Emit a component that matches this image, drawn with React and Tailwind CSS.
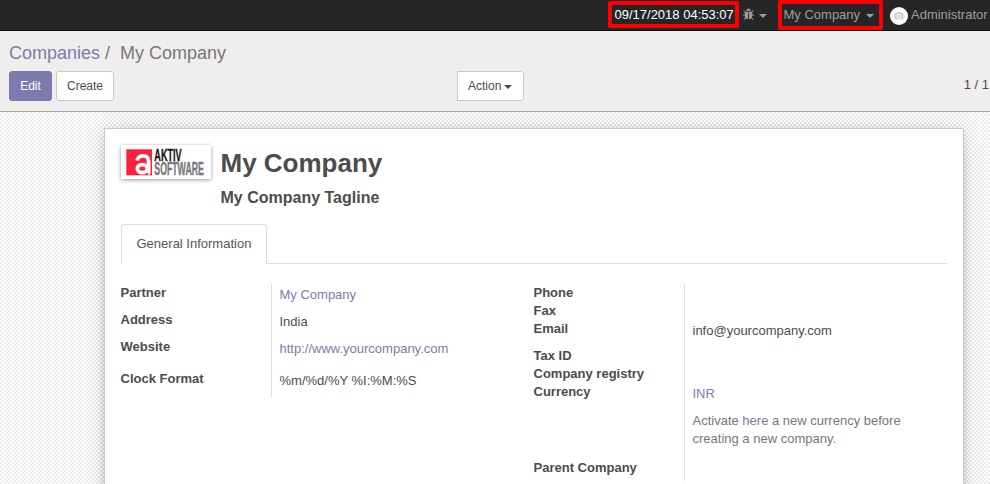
function Caret({ className = "" }) {
  return (
    <span
      className={`inline-block h-0 w-0 border-x-4 border-t-4 border-x-transparent ${className}`}
    />
  );
}

function BugIcon({ className = "" }) {
  return (
    <svg className={className} viewBox="0 0 1792 1792" fill="currentColor">
      <path d="M1696 960q0 26-19 45t-45 19h-224q0 171-67 290l208 209q19 19 19 45t-19 45q-18 19-45 19t-45-19l-198-197q-5 5-15 13t-42 28.500-65 36.500-82 29-97 13v-896h-128v896q-51 0-101.500-13.500t-87-33-66-39-43.500-32.500l-15-14-183 207q-20 21-48 21-24 0-43-16-19-18-20.500-44.500t15.500-46.500l202-227q-58-114-58-274h-224q-26 0-45-19t-19-45 19-45 45-19h224v-294l-173-173q-19-19-19-45t19-45 45-19 45 19l173 173h844l173-173q19-19 45-19t45 19 19 45-19 45l-173 173v294h224q26 0 45 19t19 45zm-480-576h-640q0-133 93.500-226.500t226.500-93.500 226.500 93.500 93.500 226.500z" />
    </svg>
  );
}

function Navbar() {
  return (
    <header className="flex h-[31px] items-start border-b border-[#110d10] bg-[#262626] text-[13px] leading-[18px] text-[#9d9d9d]">
      <div className="ml-[608px] mt-px flex h-[27px] w-[131px] shrink-0 rounded-[2px] border-4 border-[#fe0000] pl-[2.5px] pt-px text-white">
        09/17/2018 04:53:07
      </div>
      <BugIcon className="ml-[2.5px] mt-[8px] h-[13px] w-[13px] shrink-0" />
      <Caret className="ml-[4.5px] mt-[14px] border-t-[#9d9d9d]" />
      <div className="ml-[11px] flex h-[30px] w-[105px] shrink-0 rounded-[2px] border-4 border-[#fe0000] pl-[1.5px] pt-[2px]">
        My Company
        <Caret className="ml-[6px] mt-[8px] border-t-[#9d9d9d]" />
      </div>
      <svg className="ml-[7px] mt-[7px] h-[18px] w-[18px] shrink-0" viewBox="0 0 18 18">
        <circle cx="9" cy="9" r="9" fill="#fff" />
        <path d="M4.500 6h2l1-1h3l1 1h2v6.500h-9z" fill="#cfcfcf" />
        <circle cx="9" cy="9.200" r="2" fill="#cfcfcf" stroke="#fff" strokeWidth="0.9" />
      </svg>
      <span className="ml-[3px] mt-[6px] whitespace-nowrap">Administrator</span>
    </header>
  );
}

function ControlPanel() {
  return (
    <div className="h-[81px] border-b border-[#a8a8a8] bg-[#efeeec] px-[9px] pt-[9px]">
      <div className="flex h-[26px] items-center whitespace-pre text-[18px] leading-[26px] text-[#777]">
        <span className="text-[#7c7bad]">Companies</span>
        <span className="ml-[5px]">/</span>
        <span className="ml-[10px]">My Company</span>
      </div>
      <div className="mt-[5px] flex h-[30px] text-[12px] leading-[28px] text-[#4c4c4c]">
        <button className="w-[43px] rounded-[3px] border border-[#7c7bad] bg-[#7c7bad] text-white">
          Edit
        </button>
        <button className="ml-[4px] w-[58px] rounded-[3px] border border-[#c9c9c9] bg-white">
          Create
        </button>
        <button className="ml-[343px] flex w-[67px] rounded-r-[3px] border border-[#c9c9c9] bg-white pl-[10px]">
          Action
          <Caret className="ml-[3px] mt-[13px] border-t-[#4c4c4c]" />
        </button>
        <span className="ml-auto mr-[-9px] pr-px text-[13px]">1 / 1</span>
      </div>
    </div>
  );
}

function Logo() {
  return (
    <div className="h-[34px] w-[90px] bg-white shadow-[0_1px_4px_rgba(0,0,0,0.4)]">
      <svg className="h-[34px] w-[90px]" viewBox="0 0 90 34">
        <path d="M5.300 4.300H31V30.300H5.300z" fill="#fb223f" />
        <path
          d="M16 15.500C17.500 9 28 9.500 27.600 16.500V27.500"
          fill="none"
          stroke="#fff"
          strokeWidth="3.800"
        />
        <ellipse cx="21.300" cy="23.600" rx="5" ry="4" fill="none" stroke="#fff" strokeWidth="3.800" />
        <path d="M27 27.500L29.500 27L29 29.500L27 30z" fill="#fff" />
        <g fontFamily="Liberation Sans, sans-serif" fontWeight="bold" strokeWidth="0.4">
          <text transform="translate(33.300 15.700) scale(0.57 1)" fontSize="16" fill="#171717" stroke="#171717">
            AKTIV
          </text>
          <text transform="translate(33.300 30) scale(0.5 1)" fontSize="17.500" fill="#77787b" stroke="#77787b">
            SOFTWARE
          </text>
        </g>
      </svg>
    </div>
  );
}

const label = "font-bold text-[#4c4c4c]";

function LeftGroup() {
  return (
    <div className="flex h-[113px] w-[413px] leading-[18px]">
      <div className={`w-[150.5px] ${label}`}>
        <div className="h-[27px]">Partner</div>
        <div className="h-[27px]">Address</div>
        <div className="h-[32px]">Website</div>
        <div>Clock Format</div>
      </div>
      <div className="border-l border-[#ddd] pl-[7.5px] pt-[2px] text-[#4c4c4c]">
        <div className="h-[27px] text-[#7c7bad]">My Company</div>
        <div className="h-[27px]">India</div>
        <div className="h-[32px] text-[#7c7bad]">http://www.yourcompany.com</div>
        <div>%m/%d/%Y %I:%M:%S</div>
      </div>
    </div>
  );
}

function RightGroup() {
  return (
    <div className="flex h-[197px] leading-[18px]">
      <div className={`w-[150.5px] ${label}`}>
        <div className="h-[18px]">Phone</div>
        <div className="h-[18px]">Fax</div>
        <div className="h-[27px]">Email</div>
        <div className="h-[18px]">Tax ID</div>
        <div className="h-[18px]">Company registry</div>
        <div className="h-[76px]">Currency</div>
        <div>Parent Company</div>
      </div>
      <div className="w-[250px] border-l border-[#ddd] pl-[7.5px] pt-[38px] text-[#4c4c4c]">
        <div className="h-[63px]">info@yourcompany.com</div>
        <div className="h-[27px] text-[#7c7bad]">INR</div>
        <div className="text-[#777]">
          Activate <span className="text-[#7c7bad]">here</span> a new currency before
          <br />
          creating a new company.
        </div>
      </div>
    </div>
  );
}

function Sheet() {
  return (
    <section className="ml-[104px] h-[400px] w-[860px] border border-[#c8c8d3] bg-white px-[16px] pt-[16px] text-[13px] shadow-[0_5px_20px_-15px_#000,0_0_12px_rgba(0,0,0,0.12)]">
      <div className="flex h-[79px] text-[#4c4c4c]">
        <Logo />
        <div className="ml-[9.5px] font-bold">
          <h1 className="text-[26px] leading-[36px]">My Company</h1>
          <h2 className="mt-[7px] text-[16px] leading-[20px]">My Company Tagline</h2>
        </div>
      </div>
      <div className="flex h-[40px] items-stretch text-[#555]">
        <div className="w-[146px] rounded-t-[3px] border border-b-0 border-[#ddd] pl-[14.5px] leading-[38px]">
          General Information
        </div>
        <div className="grow border-b border-[#ddd]" />
      </div>
      <div className="-ml-[0.5px] mt-[20px] flex items-start">
        <LeftGroup />
        <RightGroup />
      </div>
    </section>
  );
}

export default function App() {
  return (
    <div className="h-[484px] w-[990px] overflow-hidden bg-white font-['Liberation_Sans',Arial,sans-serif]">
      <Navbar />
      <ControlPanel />
      <main className="h-[372px] overflow-hidden bg-[conic-gradient(#e9e9e9_25%,#fff_0_50%,#e9e9e9_0_75%,#fff_0)] bg-[length:4px_4px] pt-[16px]">
        <Sheet />
      </main>
    </div>
  );
}
